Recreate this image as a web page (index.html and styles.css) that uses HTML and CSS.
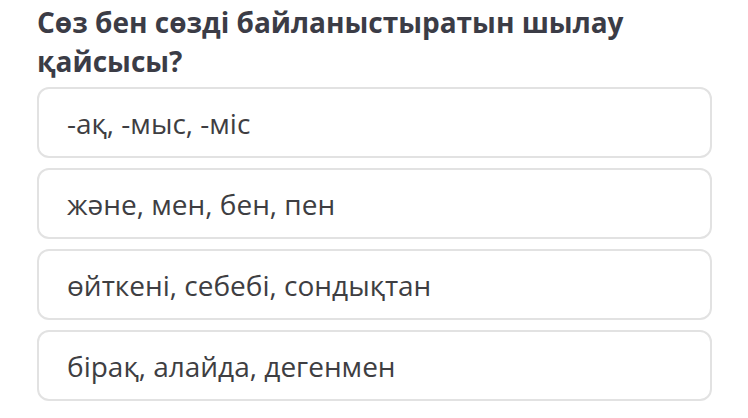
FILE: index.html
```html
<!DOCTYPE html>
<html lang="kk">
<head>
<meta charset="utf-8">
<link rel="stylesheet" href="styles.css">
</head>
<body>
<main class="quiz">
  <h1 class="question">Сөз бен сөзді байланыстыратын шылау қайсысы?</h1>
  <ul class="options">
    <li class="option">-ақ, -мыс, -міс</li>
    <li class="option">жəне, мен, бен, пен</li>
    <li class="option">өйткені, себебі, сондықтан</li>
    <li class="option">бірақ, алайда, дегенмен</li>
  </ul>
</main>
</body>
</html>
```

FILE: styles.css
```css
html, body {
  margin: 0;
  padding: 0;
  background: #ffffff;
}
body {
  font-family: "Open Sans", "Noto Sans", sans-serif;
}
.quiz {
  padding: 3px 36px 0 37px;
}
.question {
  margin: 0 0 6px 0;
  font-size: 28px;
  line-height: 39px;
  font-weight: 700;
  color: #3b3c46;
  width: 640px;
}
.options {
  list-style: none;
  margin: 0;
  padding: 0;
  display: flex;
  flex-direction: column;
  gap: 10px;
}
.option {
  box-sizing: border-box;
  height: 71px;
  border: 2px solid #e2e2e2;
  border-radius: 12px;
  padding: 0 28px;
  display: flex;
  align-items: center;
  font-size: 28px;
  color: #3e3e42;
}
```
